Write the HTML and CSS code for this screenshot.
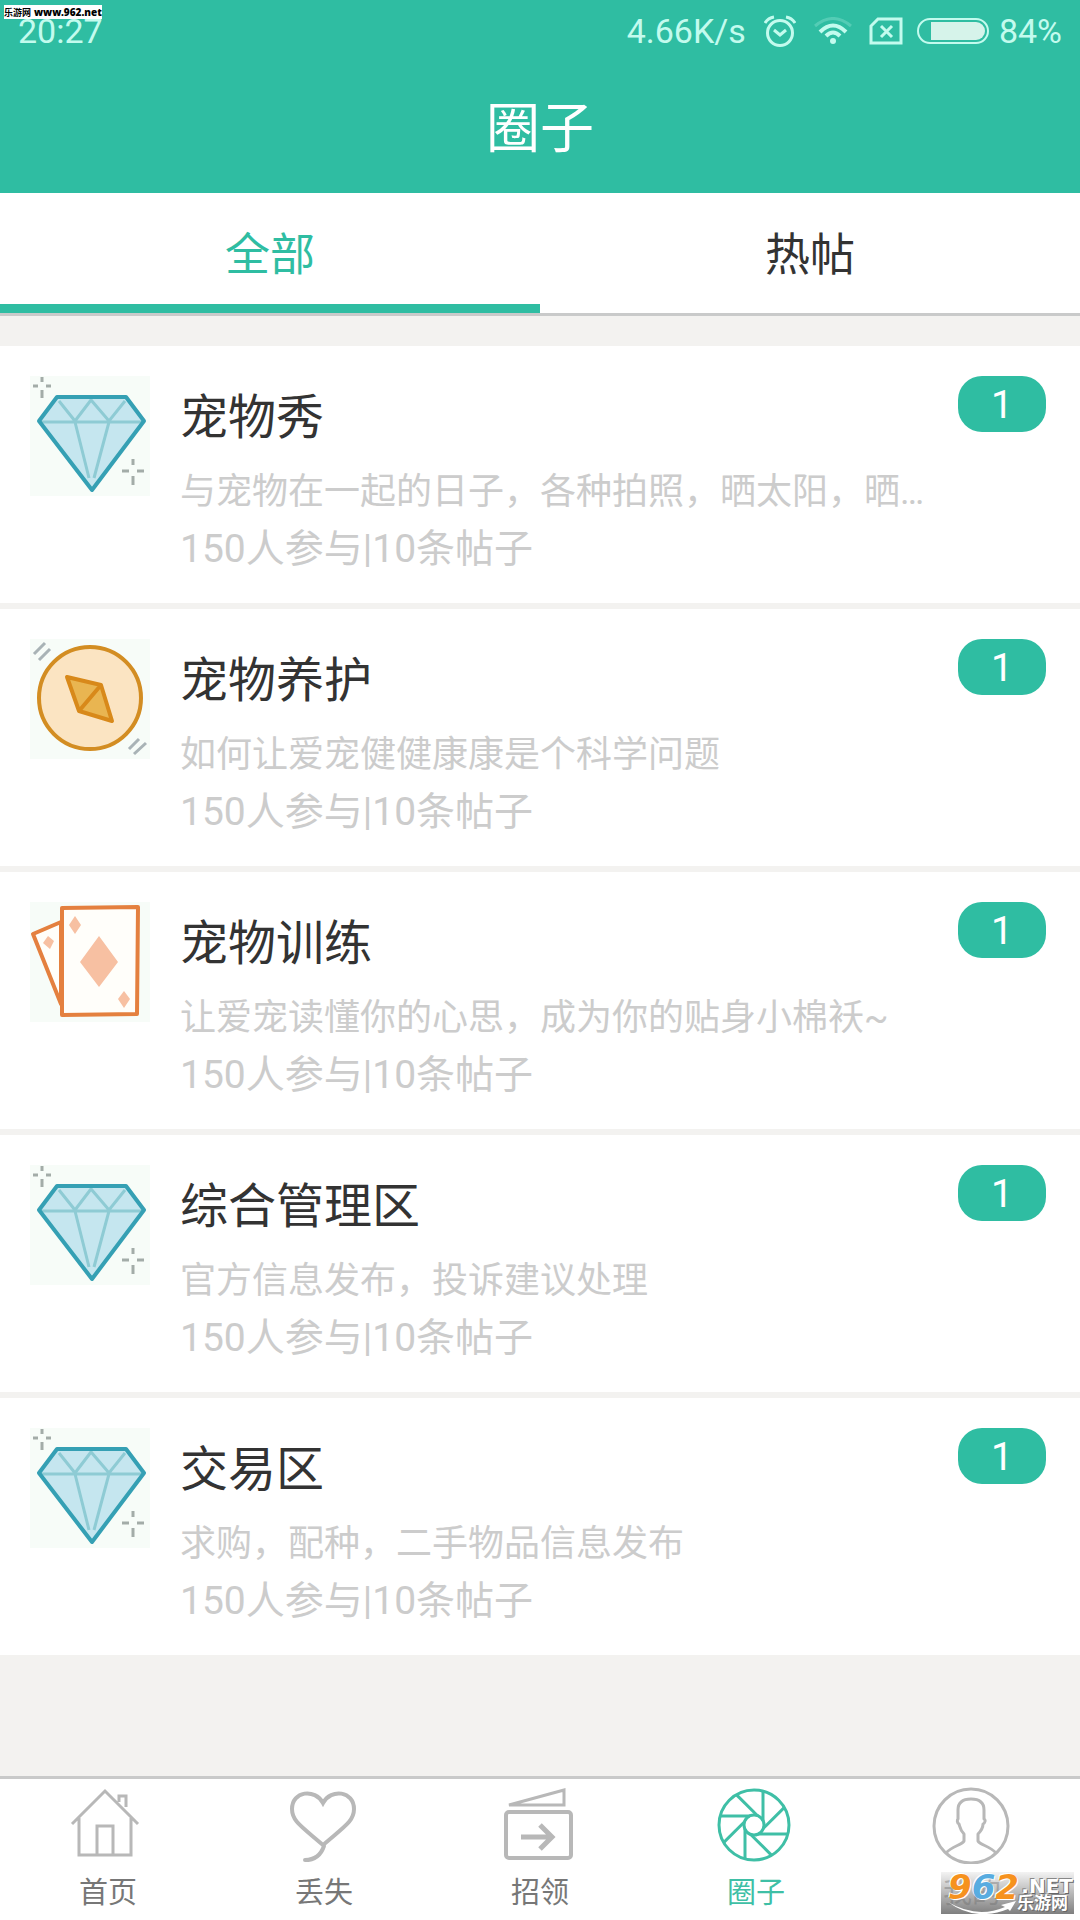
FILE: index.html
```html
<!DOCTYPE html>
<html lang="zh-CN">
<head>
<meta charset="utf-8">
<meta name="viewport" content="width=device-width, initial-scale=1">
<title>圈子</title>
<link rel="stylesheet" href="styles.css">
</head>
<body>
<svg class="sprite" aria-hidden="true">
  <symbol id="diamond" viewBox="0 0 120 120">
    <rect width="120" height="120" fill="#f7fcf8"/>
    <path d="M27 21H96L114 45L62 115L9 45Z" fill="#c5e6ef"/>
    <path d="M29 25L45 45L61 24L79 45L95 25M10 46H113M45 46L59 102M79 46L64 102" fill="none" stroke="#8ecbd4" stroke-width="3"/>
    <path d="M27 21H96L114 45L62 114L9 45Z" fill="none" stroke="#35a0b4" stroke-width="4" stroke-linejoin="round"/>
    <path d="M12 1V6M12 14V22M3 10H8M16 10H21M103 83V89M103 100V109M92 95H99M107 95H114" fill="none" stroke="#a3aca8" stroke-width="3"/>
  </symbol>
  <symbol id="compass" viewBox="0 0 120 120">
    <rect width="120" height="120" fill="#f7fcf8"/>
    <circle cx="60" cy="59" r="51" fill="#fbe4c2" stroke="#d38d22" stroke-width="4"/>
    <path d="M37 38L71 46L82 82L49 72ZM71 46L49 72" fill="#e9b551" stroke="#d8891a" stroke-width="4" stroke-linejoin="round"/>
    <path d="M4 15L15 4M9 21L20 10M99 110L109 100M104 115L116 104" stroke="#a9b3b6" stroke-width="3"/>
  </symbol>
  <symbol id="cards" viewBox="0 0 120 120">
    <rect width="120" height="120" fill="#f7fcf8"/>
    <path d="M31 20L3 32L31 102Z" fill="#fffefa" stroke="#e4803f" stroke-width="4" stroke-linejoin="round"/>
    <path d="M32 6L108 5L107 112L32 113Z" fill="#fffefa" stroke="#e4803f" stroke-width="4" stroke-linejoin="round"/>
    <path d="M69 34L88 60L69 85L50 60ZM45 14L51 23L45 32L39 23ZM94 89L100 97L94 106L88 97ZM18 34L24 39L20 47L13 41Z" fill="#f7c0a2"/>
  </symbol>
</svg>

<div class="app">
  <header class="top">
    <div class="status">
      <span class="clock">20:27</span>
      <span class="speed">4.66K/s</span>
      <svg class="ic-alarm" viewBox="0 0 32 32"><g fill="none" stroke="currentColor" stroke-width="3"><circle cx="16" cy="18" r="12.500"/><path d="M10 15L16 20L22 15M1 8Q4 3 10 2M31 8Q28 3 22 2"/></g></svg>
      <svg class="ic-wifi" viewBox="0 0 38 28"><g fill="none" stroke="currentColor" stroke-width="3"><path d="M1 9Q19-6 37 9" opacity=".25"/><path d="M6 15Q19 2 32 15" stroke-width="4"/><path d="M12 19Q19 12 26 19" stroke-width="4"/></g><circle cx="19" cy="24" r="3" fill="currentColor"/></svg>
      <svg class="ic-sim" viewBox="0 0 34 28"><path d="M9 2H32V26H2V9ZM12 9L23 20M23 9L12 20" fill="none" stroke="currentColor" stroke-width="3"/></svg>
      <svg class="ic-battery" viewBox="0 0 72 26"><rect x="1" y="1" width="70" height="24" rx="12" fill="none" stroke="currentColor" stroke-width="2"/><path d="M14 4H59A9 9 0 0 1 59 22H14Z" fill="#d6f3ea"/></svg>
      <span class="level">84%</span>
    </div>
    <h1 class="title">圈子</h1>
    <div class="source-tag"><span>乐游网</span><b>www.962.net</b></div>
  </header>

  <div class="tabs" role="tablist">
    <button class="tab tab-on" type="button" role="tab" aria-selected="true">全部</button>
    <button class="tab" type="button" role="tab" aria-selected="false">热帖</button>
  </div>

  <main class="list">
    <article class="card">
      <svg class="thumb"><use href="#diamond"/></svg>
      <div class="info"><h2 class="name">宠物秀</h2><p class="desc">与宠物在一起的日子，各种拍照，晒太阳，晒…</p><p class="meta">150人参与|10条帖子</p></div>
      <span class="badge">1</span>
    </article>
    <article class="card">
      <svg class="thumb"><use href="#compass"/></svg>
      <div class="info"><h2 class="name">宠物养护</h2><p class="desc">如何让爱宠健健康康是个科学问题</p><p class="meta">150人参与|10条帖子</p></div>
      <span class="badge">1</span>
    </article>
    <article class="card">
      <svg class="thumb"><use href="#cards"/></svg>
      <div class="info"><h2 class="name">宠物训练</h2><p class="desc">让爱宠读懂你的心思，成为你的贴身小棉袄~</p><p class="meta">150人参与|10条帖子</p></div>
      <span class="badge">1</span>
    </article>
    <article class="card">
      <svg class="thumb"><use href="#diamond"/></svg>
      <div class="info"><h2 class="name">综合管理区</h2><p class="desc">官方信息发布，投诉建议处理</p><p class="meta">150人参与|10条帖子</p></div>
      <span class="badge">1</span>
    </article>
    <article class="card">
      <svg class="thumb"><use href="#diamond"/></svg>
      <div class="info"><h2 class="name">交易区</h2><p class="desc">求购，配种，二手物品信息发布</p><p class="meta">150人参与|10条帖子</p></div>
      <span class="badge">1</span>
    </article>
  </main>

  <nav class="nav">
    <a class="nav-item" href="#home">
      <svg class="nav-icon" viewBox="0 0 80 80"><g fill="none" stroke="currentColor" stroke-width="3"><path d="M4 40L37 7L70 40M11 34V71H63V34M29 71V42H45V71M51 18V12H58V23"/></g></svg>
      <span class="nav-label">首页</span>
    </a>
    <a class="nav-item" href="#lost">
      <svg class="nav-icon" viewBox="0 0 80 80"><g fill="none" stroke="currentColor" stroke-width="4" stroke-linecap="round"><path d="M39 19C31 4 8 7 8 25C8 37 17 42 39 61C61 42 70 37 70 25C70 7 47 4 39 19ZM40 62C37 71 30 76 21 76"/></g></svg>
      <span class="nav-label">丢失</span>
    </a>
    <a class="nav-item" href="#found">
      <svg class="nav-icon" viewBox="0 0 80 80"><g fill="none" stroke="currentColor" stroke-width="4"><path d="M9 21L64 6V21Z" stroke-width="3"/><rect x="6" y="28" width="65" height="46" rx="3"/><path d="M21 53H52M40 41L52 53L40 65" stroke-width="5"/></g></svg>
      <span class="nav-label">招领</span>
    </a>
    <a class="nav-item nav-on" href="#circle" aria-current="page">
      <svg class="nav-icon" viewBox="0 0 80 80"><g fill="none" stroke="currentColor" stroke-width="3"><circle cx="38" cy="41" r="35"/><circle cx="38" cy="41" r="10"/><path id="blade" d="M47 7V37"/><use href="#blade" transform="rotate(45 38 41)"/><use href="#blade" transform="rotate(90 38 41)"/><use href="#blade" transform="rotate(135 38 41)"/><use href="#blade" transform="rotate(180 38 41)"/><use href="#blade" transform="rotate(225 38 41)"/><use href="#blade" transform="rotate(270 38 41)"/><use href="#blade" transform="rotate(315 38 41)"/></g></svg>
      <span class="nav-label">圈子</span>
    </a>
    <a class="nav-item" href="#mine">
      <svg class="nav-icon" viewBox="0 0 80 80"><g fill="none" stroke="currentColor" stroke-width="3" stroke-linejoin="round"><circle cx="39" cy="42" r="37"/><path d="M14 69C20 62 30 61 32 57V50C28 46 28 43 27 40C25 39 25 36 26 35V26C26 18 31 15 39 15C47 15 52 18 52 26V35C54 36 53 39 51 40C51 43 50 46 46 50V57C48 61 58 62 64 69"/></g></svg>
      <span class="nav-label">我的</span>
    </a>
    <div class="stamp">
      <svg class="stamp-swoosh" viewBox="0 0 133 42"><path d="M7 30Q36 47 64 35L60 33L75 29L69 39L67 37Q34 50 7 30Z" fill="#fff"/></svg>
      <span class="stamp-num"><i class="or">9</i><i class="bl">6</i><i class="or">2</i></span>
      <span class="stamp-net">.NET</span>
      <span class="stamp-cn">乐游网</span>
    </div>
  </nav>
</div>
</body>
</html>
```

FILE: styles.css
```css
* { box-sizing: border-box; }

body {
  margin: 0;
  background: #f3f2f0;
  color: #333;
  font-family: Roboto, "Noto Sans CJK SC", sans-serif;
}

h1, h2, p { margin: 0; font-weight: 400; }

.sprite { position: absolute; width: 0; height: 0; }

.app {
  min-height: 100vh;
  display: flex;
  flex-direction: column;
}

/* header */
.top {
  position: relative;
  background: #2fbda2;
  color: #fff;
}

.status {
  display: flex;
  align-items: center;
  height: 60px;
  padding: 2px 18px 0;
  color: #c3fbee;
  font-size: 34px;
}

.clock { margin-right: auto; }
.speed { margin-right: 18px; }
.ic-alarm { width: 32px; height: 32px; margin-right: 18px; }
.ic-wifi { width: 38px; height: 28px; margin-right: 17px; }
.ic-sim { width: 34px; height: 28px; margin-right: 14px; }
.ic-battery { width: 72px; height: 26px; margin-right: 10px; }

.title {
  padding-top: 7px;
  font-size: 54px;
  line-height: 126px;
  text-align: center;
}

.source-tag {
  position: absolute;
  left: 4px;
  top: 5px;
  display: flex;
  gap: 3px;
  width: 98px;
  height: 14px;
  background: #fff;
  color: #000;
  font: 700 9px/15px "Noto Sans", "Noto Sans CJK SC", sans-serif;
  white-space: nowrap;
}

.source-tag b { font-size: 10px; }

/* tabs */
.tabs {
  display: grid;
  grid-template-columns: 1fr 1fr;
  background: #fff;
  border-bottom: 3px solid #c9caca;
}

.tab {
  height: 120px;
  padding: 5px 0 0;
  border: 0;
  border-bottom: 9px solid transparent;
  background: none;
  color: #333;
  font: inherit;
  font-size: 45px;
}

.tab-on {
  color: #2fbda2;
  border-bottom-color: #2fbda2;
}

/* list */
.list {
  flex: 1;
  display: flex;
  flex-direction: column;
  gap: 6px;
  padding: 30px 0;
}

.card {
  display: flex;
  align-items: flex-start;
  padding: 30px 34px 25px 30px;
  background: #fff;
}

.thumb {
  flex: none;
  width: 120px;
  height: 120px;
}

.info {
  flex: 1;
  min-width: 0;
  padding: 12px 30px 0;
}

.name {
  margin-bottom: 16px;
  font-size: 48px;
  line-height: 60px;
}

.desc {
  overflow: hidden;
  color: #ccc;
  font-size: 36px;
  line-height: 57px;
  white-space: nowrap;
  text-overflow: ellipsis;
}

.meta {
  color: #ccc;
  font-size: 39px;
  line-height: 57px;
}

.badge {
  flex: none;
  width: 88px;
  height: 56px;
  border-radius: 24px;
  background: #2fbda2;
  color: #fff;
  font-size: 39px;
  line-height: 59px;
  text-align: center;
}

/* bottom navigation */
.nav {
  position: relative;
  display: grid;
  grid-template-columns: repeat(5, 1fr);
  height: 144px;
  padding-top: 5px;
  border-top: 3px solid #c9caca;
  background: #fff;
}

.nav-item {
  display: flex;
  flex-direction: column;
  align-items: center;
  color: #b8b8b8;
  text-decoration: none;
}

.nav-icon { width: 80px; height: 80px; }

.nav-label {
  color: #777;
  font-size: 29px;
  line-height: 58px;
}

.nav-on,
.nav-on .nav-label { color: #3fbfa6; }

/* site stamp over the last item */
.stamp {
  position: absolute;
  right: 6px;
  bottom: 6px;
  width: 133px;
  height: 42px;
  background: linear-gradient(rgba(235, 235, 235, .6), rgba(120, 120, 120, .95));
  color: #fff;
  font-family: "DejaVu Sans", "Noto Sans CJK SC", sans-serif;
  font-weight: 700;
  white-space: nowrap;
}

.stamp-swoosh { position: absolute; left: 0; top: 0; width: 133px; height: 42px; }

.stamp-num {
  position: absolute;
  left: 7px;
  top: 0;
  font-size: 34px;
  line-height: 30px;
  text-shadow: 1px 1px #fff, -1px -1px #fff;
}

.or { color: #f6921e; }
.bl { color: #58ace0; }

.stamp-net {
  position: absolute;
  right: 1px;
  top: 4px;
  font-size: 20px;
  line-height: 20px;
  text-shadow: 1px 1px #666, -1px -1px #888;
}

.stamp-cn {
  position: absolute;
  right: 6px;
  bottom: 2px;
  font-size: 17px;
  line-height: 17px;
  text-shadow: 1px 1px #666, -1px -1px #888;
}
```
